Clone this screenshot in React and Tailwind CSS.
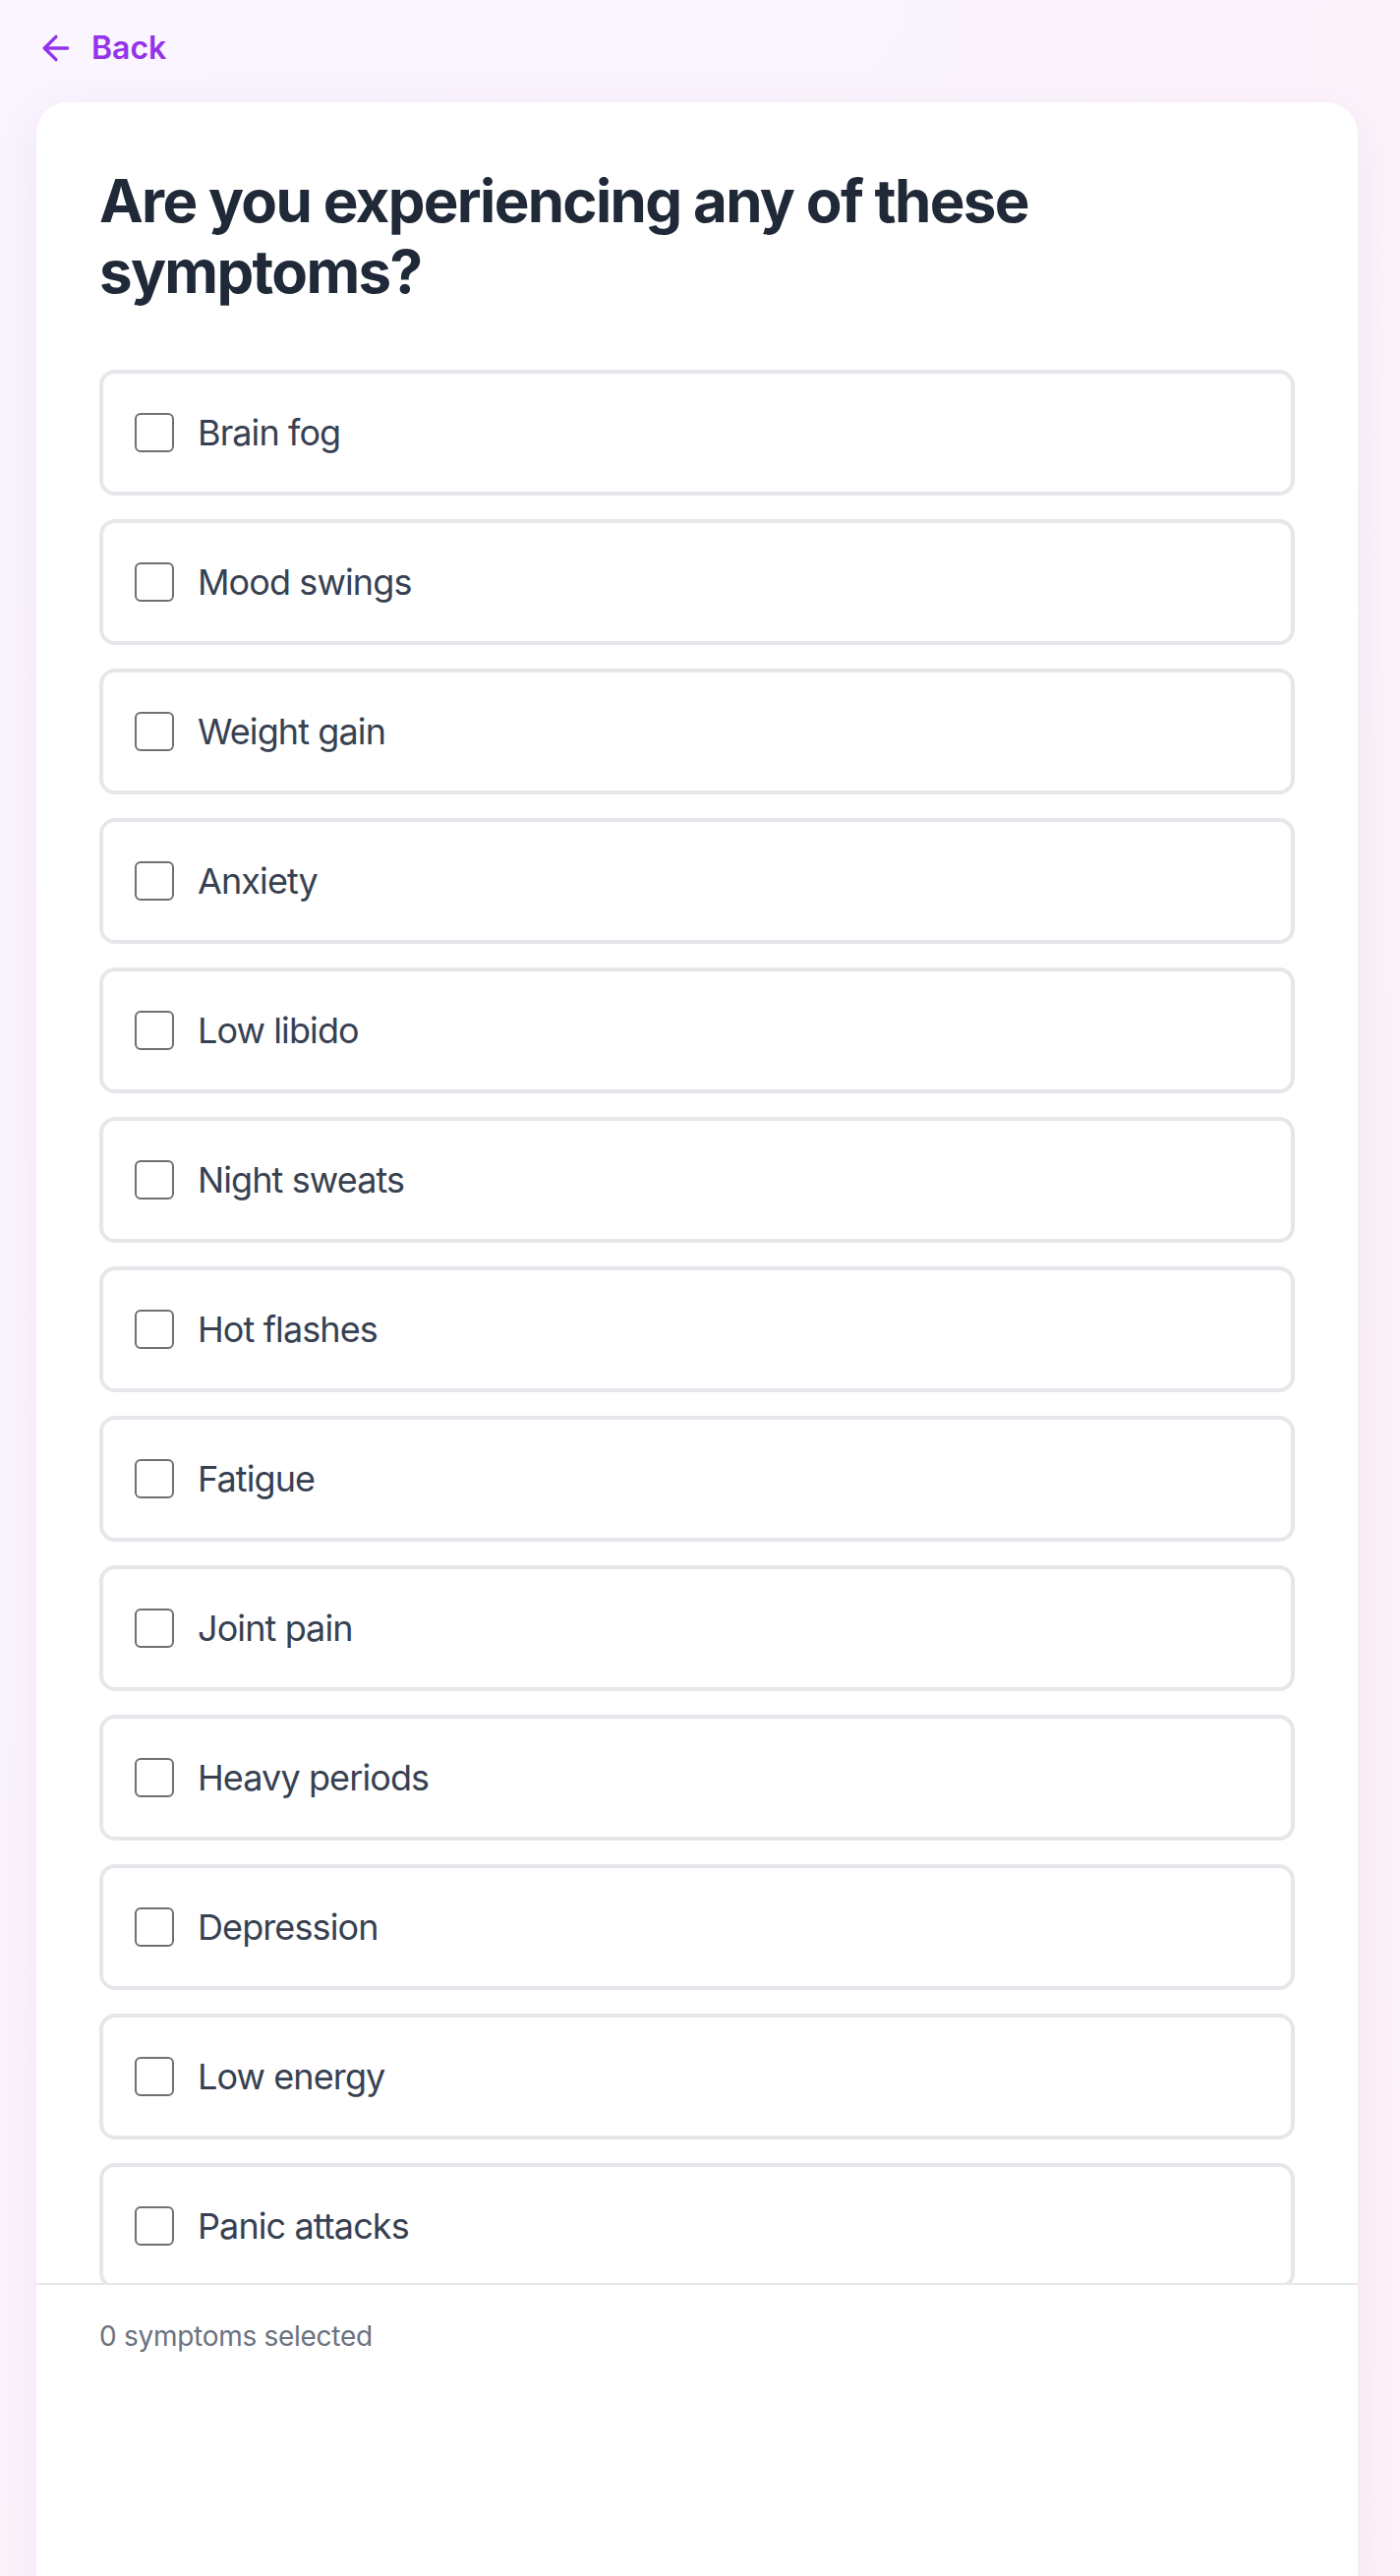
import { ArrowLeft } from 'lucide-react'

const SYMPTOMS = [
  'Brain fog',
  'Mood swings',
  'Weight gain',
  'Anxiety',
  'Low libido',
  'Night sweats',
  'Hot flashes',
  'Fatigue',
  'Joint pain',
  'Heavy periods',
  'Depression',
  'Low energy',
  'Panic attacks',
]

function SymptomRow({ label }) {
  return (
    <label className="flex items-center gap-[24px] rounded-[16px] border-[4px] border-[#e5e7eb] bg-white p-[32px]">
      <span className="h-[40px] w-[40px] shrink-0 rounded-[6px] border-[2px] border-[#707070] bg-white" />
      <span className="text-[36px] leading-[56px] tracking-[-0.025em] text-[#374151]">{label}</span>
    </label>
  )
}

export default function App() {
  const selected = []

  return (
    <div className="h-[2620px] overflow-hidden bg-gradient-to-br from-purple-50 to-pink-50 font-[Inter,'Noto_Sans',sans-serif]">
      <div className="pl-[37px] pt-[29px]">
        <button
          type="button"
          className="flex h-[40px] items-center gap-[16px] text-[32px] font-semibold text-[#9333ea]"
        >
          <ArrowLeft className="h-[40px] w-[40px]" strokeWidth={2} />
          Back
        </button>

        <section className="mt-[35px] w-[1344px] rounded-[32px] bg-white shadow-[0_12px_48px_rgba(160,90,170,0.10)]">
          <div className="h-[2218px] overflow-hidden px-[64px] pt-[64px]">
            <h1 className="mb-[64px] text-[60px] font-bold leading-[72px] tracking-[-0.028em] text-[#1f2937]">
              Are you experiencing any of these symptoms?
            </h1>
            <div className="flex flex-col gap-[24px]">
              {SYMPTOMS.map((s) => (
                <SymptomRow key={s} label={s} />
              ))}
            </div>
          </div>
          <div className="border-t-[2px] border-[#e5e7eb] px-[64px] pb-[400px] pt-[32px]">
            <p className="text-[28px] leading-[40px] tracking-[-0.01em] text-[#6b7280]">
              {selected.length} symptoms selected
            </p>
          </div>
        </section>
      </div>
    </div>
  )
}
